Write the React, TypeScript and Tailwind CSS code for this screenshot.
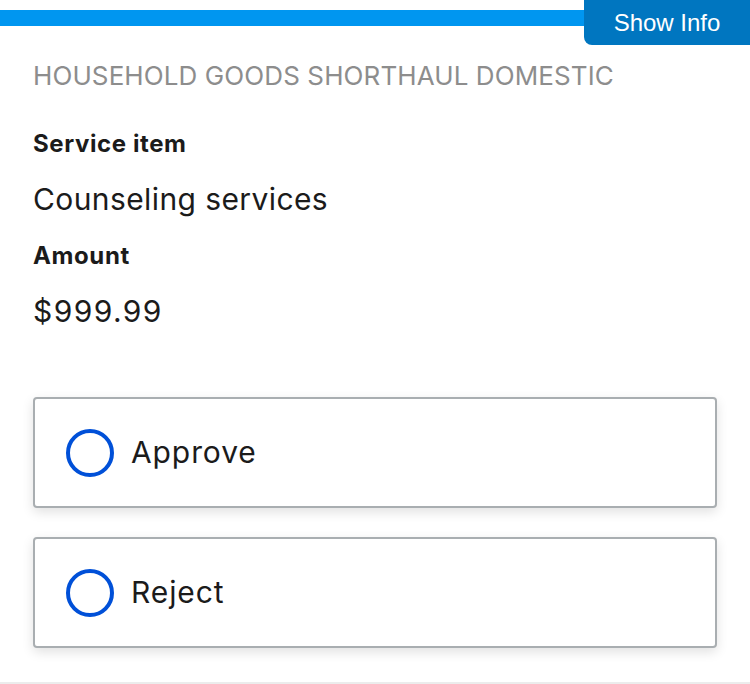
import React from "react";

const font = { fontFamily: "Inter, 'Noto Sans', sans-serif" };

function Option({ label }: { label: string }) {
  return (
    <div className="flex h-[111px] items-center rounded-[4px] border-2 border-[#a9aeb1] bg-white pl-[31px] shadow-[0_4px_12px_rgba(0,0,0,0.12)]">
      <span className="h-[48px] w-[48px] shrink-0 rounded-full border-[4px] border-[#0050d8]" />
      <span className="ml-[17px] text-[30px] tracking-[0.9px] text-[#1b1b1b]">{label}</span>
    </div>
  );
}

export default function App() {
  return (
    <div
      className="relative flex h-[684px] w-[750px] flex-col overflow-hidden bg-white"
      style={font}
    >
      <div className="mt-[10px] h-[16px] w-full bg-[#0096f0]" />
      <div className="absolute right-0 top-0 flex h-[45px] w-[166px] items-center justify-center rounded-bl-[8px] bg-[#0076c0] text-[24px] text-white [font-family:'Liberation_Sans',Arial,sans-serif]">
        Show Info
      </div>
      <div className="flex flex-1 flex-col px-[33px]">
        <div className="mt-[33px] text-[26px] leading-[34px] tracking-[0.1px] text-[#8d8d8d]">
          HOUSEHOLD GOODS SHORTHAUL DOMESTIC
        </div>
        <div className="mt-[36px] text-[24px] font-bold leading-[30px] tracking-[0.6px] text-[#1b1b1b]">
          Service item
        </div>
        <div className="mt-[22px] text-[30px] leading-[36px] tracking-[0.4px] text-[#1b1b1b]">
          Counseling services
        </div>
        <div className="mt-[24px] text-[24px] font-bold leading-[30px] tracking-[0.6px] text-[#1b1b1b]">
          Amount
        </div>
        <div className="mt-[22px] text-[30px] leading-[36px] tracking-[1.4px] text-[#1b1b1b]">
          $999.99
        </div>
        <div className="mt-[68px] flex flex-col gap-[29px]">
          <Option label="Approve" />
          <Option label="Reject" />
        </div>
      </div>
      <div className="h-[2px] w-full bg-[#ececec]" />
    </div>
  );
}
